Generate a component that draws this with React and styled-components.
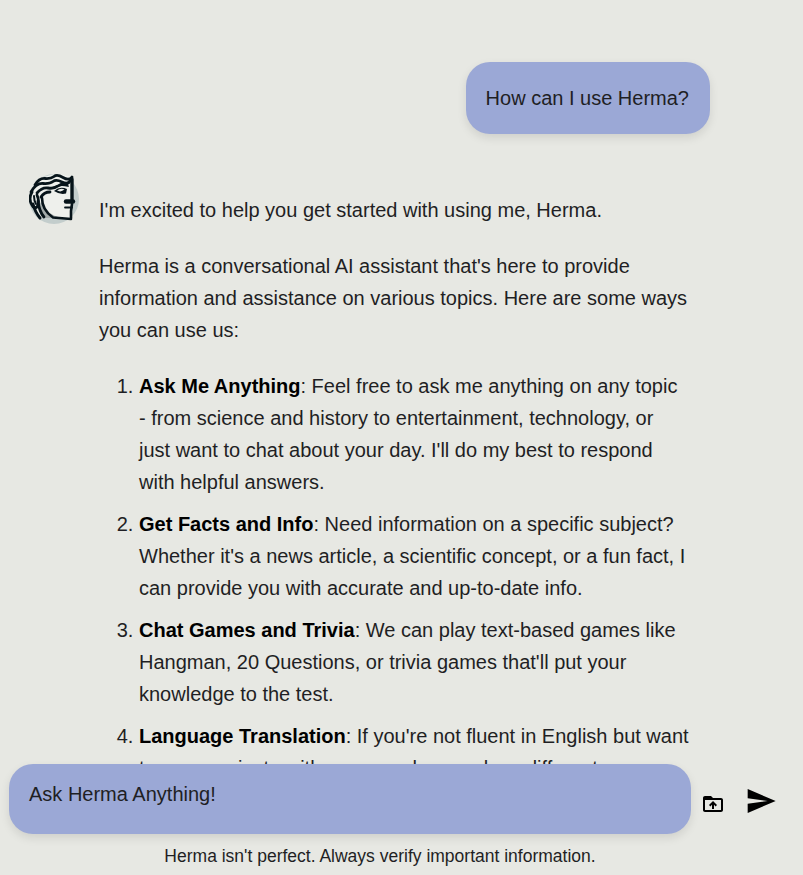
import React from 'react';
import styled, {createGlobalStyle} from 'styled-components';

const Global = createGlobalStyle`
  html, body {
    margin: 0;
    padding: 0;
    height: 100%;
    background-color: #e7e8e3;
    overflow: hidden;
  }
  body {
    font-family: "Liberation Sans", Arial, sans-serif;
    color: #1f1f24;
  }
`;

const Page = styled.div`
  display: flex;
  flex-direction: column;
  height: 875px;
  width: 803px;
  overflow: hidden;
`;

const Conversation = styled.div`
  flex: 1;
  min-height: 0;
  display: flex;
  flex-direction: column;
  padding: 62px 0 0 29px;
  overflow: hidden;
`;

const UserRow = styled.div`
  display: flex;
  justify-content: flex-end;
  padding-right: 93px;
  margin-bottom: 40px;
`;

const UserBubble = styled.div`
  background-color: #9ba8d6;
  border-radius: 24px;
  padding: 20px 21px 20px 20px;
  font-size: 20px;
  line-height: 32px;
  box-shadow: 0 4px 10px rgba(0, 0, 0, 0.1);
`;

const BotRow = styled.div`
  display: flex;
  align-items: flex-start;
`;

const Avatar = styled.svg`
  width: 50px;
  height: 50px;
  flex-shrink: 0;
`;

const BotBody = styled.div`
  width: 591px;
  margin-left: 20px;
  padding-top: 20px;
  font-size: 20px;
  line-height: 32px;
`;

const Para = styled.p`
  margin: 0 0 24px;
`;

const Steps = styled.ol`
  margin: 0;
  padding-left: 40px;
`;

const Step = styled.li`
  margin-bottom: 10px;
  b {
    color: #000;
  }
`;

const Composer = styled.div`
  flex-shrink: 0;
  display: flex;
  flex-direction: column;
`;

const ComposerRow = styled.div`
  display: flex;
  align-items: center;
  padding-left: 9px;
`;

const InputBox = styled.div`
  width: 682px;
  height: 70px;
  box-sizing: border-box;
  padding: 14px 20px;
  background-color: #9ba8d6;
  border-radius: 24px;
  font-size: 20px;
  line-height: 32px;
  box-shadow: 0 4px 10px rgba(0, 0, 0, 0.1);
`;

const IconButton = styled.button`
  display: flex;
  padding: 0;
  border: 0;
  background: none;
  color: #000;
  margin-left: ${(props) => props.gap}px;
  margin-top: ${(props) => props.top}px;
`;

const Disclaimer = styled.div`
  text-align: center;
  font-size: 17.5px;
  line-height: 22px;
  margin-top: 11px;
  padding: 0 43px 8px 0;
  height: 22px;
`;

const HermaLogo = () => (
  <Avatar viewBox="0 0 50 50">
    <circle cx="25" cy="25" r="25" fill="#c3cdcc" />
    {/* head and shaded neck */}
    <path d="M3 12 Q14 0 30 0 L43 3 L43 44 L12 44 L2 30Z" fill="#eef0ec" />
    <path d="M13 26 Q14 37 26 42 L32 44 L13 44 L9 34Z" fill="#a3abaa" />
    {/* hair */}
    <g fill="none" stroke="#07141a" strokeWidth="2.8" strokeLinecap="round">
      <path d="M6 11 Q10 4 16 4.5 T25 2.5 T34 3.5 T43 3" />
      <path d="M2 18 Q7 9 14 9.5 T24 7.5 T33 8 T41 7" />
      <path d="M8 19 Q13 13 19 14 T29 12 T38 10" />
      <path d="M12 23 Q15 18 21 18" />
      <path d="M3 18 Q-1 25 3 31 Q5 35 8 33 Q11 28 8 21" />
      <path d="M4 30 Q6 38 11 44" strokeWidth="3" />
      <path d="M9 27 Q10 37 15 43" />
      <path d="M5 22 Q5 27 7 30" strokeWidth="2" />
    </g>
    {/* profile, jaw and chin */}
    <g fill="none" stroke="#07141a" strokeLinecap="round" strokeLinejoin="round">
      <path d="M43 5 L43 27" strokeWidth="3.4" />
      <path d="M37 27.5 L44 27.5" strokeWidth="4.4" />
      <path d="M36 33.5 L43 33.5" strokeWidth="1.8" />
      <path d="M43 30 L42 37 L42 44" strokeWidth="2.6" />
      <path d="M13 24 Q13 36 24 43.5 L42 45" strokeWidth="2.6" />
      <path d="M24 13.5 Q31 9.5 39 12" strokeWidth="1.8" />
    </g>
    {/* eye */}
    <path d="M25 17 Q31 11.5 38 15 L37 19.5 Q31 21 25 17Z" fill="#07141a" />
    <path d="M28 16.6 Q32 13.6 35.5 15.6 Q32 18.6 28 16.6Z" fill="#eef0ec" />
  </Avatar>
);

const UploadFolder = () => (
  <svg width="24" height="24" viewBox="0 0 24 24" fill="currentColor">
    <path d="M20 6h-8l-2-2H4c-1.11 0-1.99.89-1.99 2L2 18c0 1.11.89 2 2 2h16c1.11 0 2-.89 2-2V8c0-1.11-.89-2-2-2zm0 12H4V8h16v10zM8 13.01l1.41 1.41L11 12.84V17h2v-4.16l1.59 1.59L16 13.01 12.01 9 8 13.01z" />
  </svg>
);

const SendArrow = () => (
  <svg width="32" height="32" viewBox="0 0 24 24" fill="currentColor">
    <path d="M2.01 21 23 12 2.01 3 2 10l15 2-15 2z" />
  </svg>
);

export default function App() {
  return (
    <Page>
      <Global />
      <Conversation>
        <UserRow>
          <UserBubble>How can I use Herma?</UserBubble>
        </UserRow>
        <BotRow>
          <HermaLogo />
          <BotBody>
            <Para>I'm excited to help you get started with using me, Herma.</Para>
            <Para>Herma is a conversational AI assistant that's here to provide information and assistance on various topics. Here are some ways you can use us:</Para>
            <Steps>
              <Step><b>Ask Me Anything</b>: Feel free to ask me anything on any topic<br />- from science and history to entertainment, technology, or<br />just want to chat about your day. I'll do my best to respond with helpful answers.</Step>
              <Step><b>Get Facts and Info</b>: Need information on a specific subject? Whether it's a news article, a scientific concept, or a fun fact, I can provide you with accurate and up-to-date info.</Step>
              <Step><b>Chat Games and Trivia</b>: We can play text-based games like Hangman, 20 Questions, or trivia games that'll put your knowledge to the test.</Step>
              <Step><b>Language Translation</b>: If you're not fluent in English but want to communicate with anyone who speaks a different language, I can help.</Step>
            </Steps>
          </BotBody>
        </BotRow>
      </Conversation>
      <Composer>
        <ComposerRow>
          <InputBox>Ask Herma Anything!</InputBox>
          <IconButton gap={10} top={10}><UploadFolder /></IconButton>
          <IconButton gap={20} top={4}><SendArrow /></IconButton>
        </ComposerRow>
        <Disclaimer>Herma isn't perfect. Always verify important information.</Disclaimer>
      </Composer>
    </Page>
  );
}
